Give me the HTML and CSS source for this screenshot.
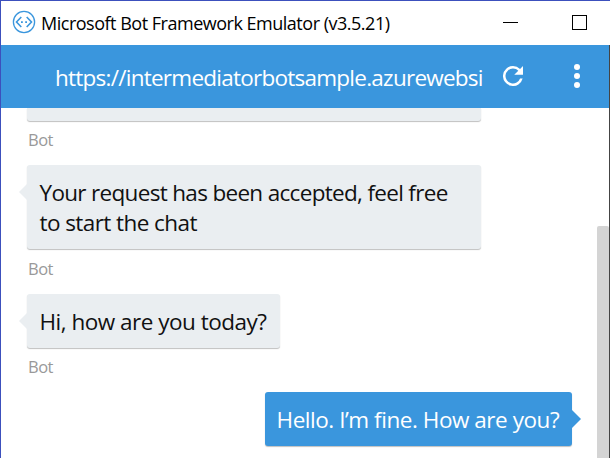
FILE: index.html
```html
<!DOCTYPE html>
<html lang="en">
<head>
<meta charset="utf-8">
<title>Microsoft Bot Framework Emulator (v3.5.21)</title>
<link rel="stylesheet" href="styles.css">
</head>
<body>
<div class="window">
  <header class="titlebar">
    <svg class="logo" viewBox="0 0 24 24" fill="none" stroke="#3a96dd">
      <circle cx="12" cy="12" r="10.6" stroke-width="1.3"/>
      <path d="M9.3 7 4.5 12l4.8 5M14.7 7l4.8 5-4.8 5" stroke-width="1.6"/>
      <path d="M9 11.2h1.8v1.8H9zM13.2 11.2H15v1.8h-1.8z" fill="#3a96dd" stroke="none"/>
    </svg>
    <h1 class="title"><span>Microsoft Bot Framework Emulator (v3.5.21)</span></h1>
    <span class="minimize"></span>
    <span class="maximize"></span>
  </header>
  <nav class="addressbar">
    <div class="url"><span>https://intermediatorbotsample.azurewebsi</span></div>
    <svg class="refresh" viewBox="4 4 16 16" fill="#fff"><path d="M17.65 6.35A7.96 7.96 0 0 0 12 4a8 8 0 1 0 7.73 10h-2.08A6 6 0 1 1 12 6c1.66 0 3.14.69 4.22 1.78L13 11h7V4z"/></svg>
    <svg class="more" viewBox="0 0 6 24" fill="#fff"><circle cx="3" cy="3" r="3"/><circle cx="3" cy="12" r="3"/><circle cx="3" cy="21" r="3"/></svg>
  </nav>
  <main class="chat">
    <div class="messages">
      <div class="bubble clipped"></div>
      <div class="sender">Bot</div>
      <div class="bubble bot wide"><span class="line one">Your request has been accepted, feel free</span><br><span class="line two">to start the chat</span></div>
      <div class="sender tall">Bot</div>
      <div class="bubble bot short"><span class="line three">Hi, how are you today?</span></div>
      <div class="sender">Bot</div>
      <div class="bubble user"><span class="line four">Hello. I’m fine. How are you?</span></div>
    </div>
    <div class="scrollbar"></div>
  </main>
</div>
</body>
</html>
```
FILE: styles.css
```css
* { box-sizing: border-box; }
body {
  margin: 0;
  overflow: hidden;
  font-family: "Open Sans", "Noto Sans", sans-serif;
  background: #fff;
}
.window {
  width: 610px;
  height: 458px;
  display: flex;
  flex-direction: column;
  border: solid #3c50bd;
  border-width: 1px 0 0 1px;
  overflow: hidden;
}
.titlebar {
  height: 44px;
  flex: none;
  display: flex;
  align-items: center;
  padding: 0 23px 0 11px;
}
.logo { width: 24px; height: 24px; margin-top: -3px; }
.title {
  flex: 1;
  margin: 0 0 0 5px;
  font-size: 18px;
  font-weight: 400;
  line-height: 24px;
  letter-spacing: -0.49px;
  white-space: nowrap;
  color: #000;
}
.minimize { width: 15px; height: 1px; margin: -1px 54px 0 0; background: #000; }
.maximize { width: 15px; height: 15px; margin-top: -1px; border: 1px solid #000; }
.addressbar {
  height: 63px;
  flex: none;
  display: flex;
  align-items: center;
  padding: 0 29px 0 54px;
  background: #3a96dd;
  border-right: 1px solid #444;
}
.url {
  width: 428px;
  flex: none;
  margin-top: 3px;
  font-size: 22.5px;
  line-height: 30px;
  letter-spacing: -0.75px;
  white-space: nowrap;
  color: #fff;
}
.refresh { width: 20px; height: 20px; margin-left: 20px; margin-top: -1px; }
.more { width: 6px; height: 24px; margin-left: auto; margin-top: -2px; }
.chat {
  flex: 1;
  min-height: 0;
  display: flex;
  justify-content: space-between;
  border-right: 1px solid #444;
}
.messages {
  width: 571px;
  padding-left: 26px;
  display: flex;
  flex-direction: column;
  align-items: flex-start;
}
.bubble {
  position: relative;
  flex: none;
  padding: 13px 12.5px 11px;
  border-radius: 3px;
  background: #eaeef1;
  box-shadow: 0 1px 1px rgba(0, 0, 0, .25);
  font-size: 22.5px;
  line-height: 30px;
  white-space: nowrap;
  color: #111;
}
.clipped { width: 453.5px; height: 13px; padding: 0; border-radius: 0 0 3px 3px; }
.wide { width: 453.5px; height: 84px; }
.short { width: 252.5px; }
.user {
  width: 307px;
  padding-left: 11.5px;
  align-self: flex-end;
  color: #fff;
  background: #3a96dd;
}
.bot::before, .user::after {
  content: "";
  position: absolute;
  border: solid transparent;
}
.bot::before {
  left: -8px;
  top: 19px;
  border-width: 8px 8px 8px 0;
  border-right-color: #eaeef1;
}
.user::after {
  right: -9px;
  top: 18px;
  border-width: 9px 0 9px 9px;
  border-left-color: #3a96dd;
}
.sender {
  flex: none;
  height: 44px;
  padding: 7px 0 0 1px;
  font-size: 16.5px;
  line-height: 24px;
  letter-spacing: -0.5px;
  color: #999;
}
.tall { height: 45px; padding-top: 8px; }
.one { letter-spacing: -0.68px; }
.two { letter-spacing: -0.57px; }
.three { letter-spacing: -0.5px; }
.four { letter-spacing: -0.46px; }
.scrollbar {
  width: 12px;
  margin-top: 118px;
  border-radius: 2px 2px 0 0;
  background: #d4d4d4;
}
```
